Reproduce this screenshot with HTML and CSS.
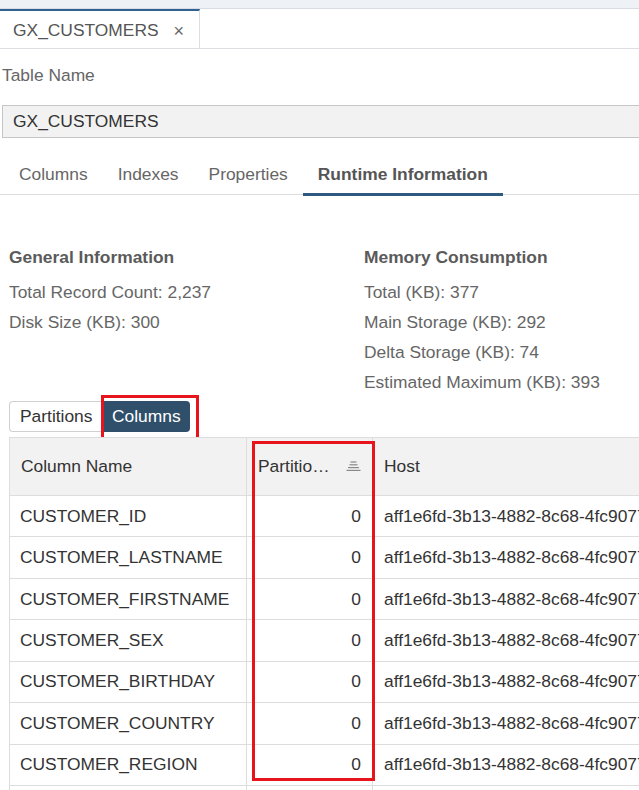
FILE: index.html
```html
<!DOCTYPE html>
<html lang="en">
<head>
<meta charset="utf-8">
<title>GX_CUSTOMERS</title>
<link rel="stylesheet" href="styles.css">
</head>
<body>
<div class="page">
  <div class="topbar"></div>
  <div class="doc-tabs">
    <div class="doc-tab"><span class="doc-tab-title">GX_CUSTOMERS</span><span class="doc-tab-close">×</span></div>
  </div>

  <div class="field">
    <div class="field-label">Table Name</div>
    <div class="field-input">GX_CUSTOMERS</div>
  </div>

  <div class="subtabs">
    <div class="subtab">Columns</div>
    <div class="subtab">Indexes</div>
    <div class="subtab">Properties</div>
    <div class="subtab active">Runtime Information</div>
  </div>

  <div class="info">
    <div class="info-col">
      <div class="info-head">General Information</div>
      <div class="info-line">Total Record Count: 2,237</div>
      <div class="info-line">Disk Size (KB): 300</div>
    </div>
    <div class="info-col">
      <div class="info-head">Memory Consumption</div>
      <div class="info-line">Total (KB): 377</div>
      <div class="info-line">Main Storage (KB): 292</div>
      <div class="info-line">Delta Storage (KB): 74</div>
      <div class="info-line">Estimated Maximum (KB): 393</div>
    </div>
  </div>

  <div class="segmented">
    <div class="seg seg-first">Partitions</div>
    <div class="seg seg-active highlighted">Columns</div>
  </div>

  <div class="grid-wrap">
    <div class="col-highlight"></div>
    <table class="grid">
      <colgroup>
        <col class="c1"><col class="c2"><col class="c3">
      </colgroup>
      <thead>
        <tr>
          <th>Column Name</th>
          <th><div class="th-sort"><span class="th-text">Partition ID</span>
            <svg class="sort-icon" width="15" height="11" viewBox="0 0 15 11"><g stroke="#8a8a8a" stroke-width="1.2"><line x1="4.5" y1="1" x2="10.5" y2="1"/><line x1="3.5" y1="3.8" x2="11.5" y2="3.8"/><line x1="2" y1="6.6" x2="13" y2="6.6"/><line x1="0.5" y1="9.4" x2="14.5" y2="9.4"/></g></svg>
          </div></th>
          <th>Host</th>
        </tr>
      </thead>
      <tbody>
        <tr><td>CUSTOMER_ID</td><td class="num">0</td><td>aff1e6fd-3b13-4882-8c68-4fc90770e2a1</td></tr>
        <tr><td>CUSTOMER_LASTNAME</td><td class="num">0</td><td>aff1e6fd-3b13-4882-8c68-4fc90770e2a1</td></tr>
        <tr><td>CUSTOMER_FIRSTNAME</td><td class="num">0</td><td>aff1e6fd-3b13-4882-8c68-4fc90770e2a1</td></tr>
        <tr><td>CUSTOMER_SEX</td><td class="num">0</td><td>aff1e6fd-3b13-4882-8c68-4fc90770e2a1</td></tr>
        <tr><td>CUSTOMER_BIRTHDAY</td><td class="num">0</td><td>aff1e6fd-3b13-4882-8c68-4fc90770e2a1</td></tr>
        <tr><td>CUSTOMER_COUNTRY</td><td class="num">0</td><td>aff1e6fd-3b13-4882-8c68-4fc90770e2a1</td></tr>
        <tr><td>CUSTOMER_REGION</td><td class="num">0</td><td>aff1e6fd-3b13-4882-8c68-4fc90770e2a1</td></tr>
        <tr class="last"><td></td><td></td><td></td></tr>
      </tbody>
    </table>
  </div>
</div>
</body>
</html>
```

FILE: styles.css
```css
* { box-sizing: border-box; }
html, body { margin: 0; padding: 0; background: #fff; }
body {
  font-family: "Liberation Sans", Arial, sans-serif;
  font-size: 17.4px;
  color: #666;
  overflow: hidden;
  width: 639px;
  height: 790px;
}
.page { width: 760px; }

.topbar {
  height: 9px;
  background: #eef2f7;
  border-bottom: 1px solid #d8dce2;
}

.doc-tabs {
  display: flex;
  height: 40px;
  border-bottom: 1px solid #dcdee2;
}
.doc-tab {
  width: 200px;
  border-top: 2px solid #2e6290;
  border-right: 1px solid #dcdee2;
  display: flex;
  align-items: center;
  padding-left: 13px;
  padding-top: 2px;
  color: #555;
}
.doc-tab-title { margin-right: 15px; }
.doc-tab-close { font-size: 18px; color: #666; position: relative; top: 1px; }

.field { padding: 0 0 0 2px; }
.field-label {
  height: 56px;
  display: flex;
  align-items: center;
  padding-bottom: 3px;
  color: #666;
}
.field-input {
  height: 33px;
  background: #f2f2f2;
  border: 1px solid #c6c6c6;
  border-right: none;
  display: flex;
  align-items: center;
  padding-left: 10px;
  color: #333;
}

.subtabs {
  display: flex;
  margin-top: 12px;
  padding-left: 4px;
  height: 45px;
  border-bottom: 1px solid #dcdcdc;
}
.subtab {
  padding: 5px 15px 0;
  display: flex;
  align-items: center;
  color: #666;
  border-bottom: 3px solid transparent;
  margin-bottom: -2px;
}
.subtab.active {
  font-weight: bold;
  color: #555;
  border-bottom-color: #2e5a80;
}

.info {
  display: grid;
  grid-template-columns: 355px 1fr;
  padding: 47px 0 0 9px;
}
.info-head {
  font-weight: bold;
  color: #5a5a5a;
  height: 30px;
  line-height: 30px;
  margin-bottom: 5px;
}
.info-line {
  height: 30px;
  line-height: 30px;
  color: #666;
}

.segmented {
  display: flex;
  margin: 4px 0 0 9px;
  height: 31px;
}
.seg {
  display: flex;
  align-items: center;
  padding: 0 10px;
  color: #333;
}
.seg-first {
  border: 1px solid #d0d0d0;
  border-right: none;
  border-radius: 4px 0 0 4px;
  width: 93px;
}
.seg-active {
  background: #2f4f6b;
  color: #fff;
  border-radius: 0 4px 4px 0;
  width: 88px;
  position: relative;
}
.highlighted::after {
  content: "";
  position: absolute;
  left: -1px;
  top: -6px;
  width: 92px;
  height: 42px;
  border: 3px solid #e8141c;
}

.grid-wrap {
  position: relative;
  margin: 5px 0 0 9px;
}
.col-highlight {
  position: absolute;
  left: 243px;
  top: 4px;
  width: 123px;
  height: 340px;
  border: 3px solid #e8141c;
  z-index: 2;
}
.grid {
  border-collapse: collapse;
  table-layout: fixed;
  width: 760px;
  color: #333;
}
.grid col.c1 { width: 237px; }
.grid col.c2 { width: 126px; }
.grid th, .grid td {
  border: 1px solid #dddddd;
  white-space: nowrap;
  overflow: hidden;
  padding: 0 10px 0 11px;
  text-align: left;
  font-weight: normal;
}
.grid td:first-child { padding-left: 10px; }
.grid th {
  background: #f2f2f2;
  height: 58px;
  border-top: 1px solid #dddddd;
}
.grid td { height: 41.43px; }
.grid td.num { text-align: right; padding-right: 11px; }
.grid tr.last td { height: 10px; }
.th-sort { display: flex; align-items: center; }
.th-text {
  width: 76px;
  overflow: hidden;
  text-overflow: ellipsis;
  white-space: nowrap;
}
.sort-icon { margin-left: 12px; flex: none; }
```
